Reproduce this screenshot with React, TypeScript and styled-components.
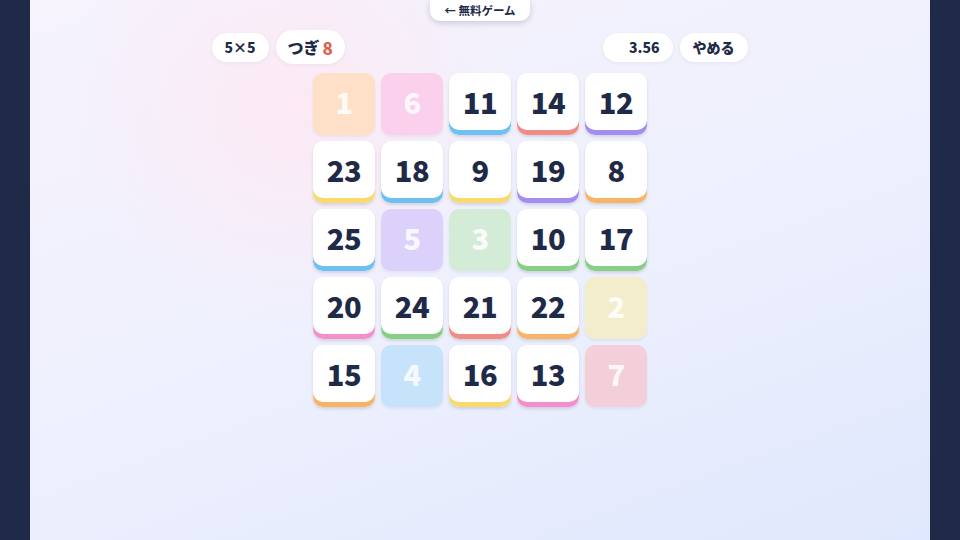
import styled, { createGlobalStyle } from "styled-components";

type Hue = "orange" | "pink" | "blue" | "red" | "purple" | "yellow" | "green";

interface Cell {
  value: number;
  hue: Hue;
  done?: boolean;
}

const hues: Record<Hue, { bar: string; soft: string }> = {
  orange: { bar: "#f7b466", soft: "#fde0c7" },
  pink: { bar: "#f48fcb", soft: "#fad0ec" },
  blue: { bar: "#6fc0f2", soft: "#c6e3fb" },
  red: { bar: "#f18c84", soft: "#f3d0d9" },
  purple: { bar: "#a48cf0", soft: "#dcd1fb" },
  yellow: { bar: "#f8da6e", soft: "#f4edcb" },
  green: { bar: "#86cf85", soft: "#d4ebd7" },
};

const board: Cell[] = [
  { value: 1, hue: "orange", done: true },
  { value: 6, hue: "pink", done: true },
  { value: 11, hue: "blue" },
  { value: 14, hue: "red" },
  { value: 12, hue: "purple" },
  { value: 23, hue: "yellow" },
  { value: 18, hue: "blue" },
  { value: 9, hue: "yellow" },
  { value: 19, hue: "purple" },
  { value: 8, hue: "orange" },
  { value: 25, hue: "blue" },
  { value: 5, hue: "purple", done: true },
  { value: 3, hue: "green", done: true },
  { value: 10, hue: "green" },
  { value: 17, hue: "green" },
  { value: 20, hue: "pink" },
  { value: 24, hue: "green" },
  { value: 21, hue: "red" },
  { value: 22, hue: "orange" },
  { value: 2, hue: "yellow", done: true },
  { value: 15, hue: "orange" },
  { value: 4, hue: "blue", done: true },
  { value: 16, hue: "yellow" },
  { value: 13, hue: "pink" },
  { value: 7, hue: "red", done: true },
];

const GlobalStyle = createGlobalStyle`
  html, body {
    margin: 0;
    padding: 0;
    width: 960px;
    height: 540px;
    overflow: hidden;
    background: #1e2a47;
    font-family: "Noto Sans CJK JP", "Noto Sans", sans-serif;
  }
`;

const Frame = styled.div`
  display: flex;
  justify-content: center;
  width: 960px;
  height: 540px;
  background: #1e2a47;
`;

const Stage = styled.main`
  display: flex;
  flex-direction: column;
  align-items: center;
  width: 900px;
  height: 540px;
  background:
    radial-gradient(circle at 29% 20%, rgba(253, 232, 243, 0.9) 0, rgba(253, 232, 243, 0) 220px),
    linear-gradient(160deg, #f6f3fd 0%, #eef0fd 50%, #e0e8fd 100%);
`;

const BackTab = styled.button`
  height: 21px;
  padding: 0 14px;
  border: none;
  border-radius: 0 0 10px 10px;
  background: #ffffff;
  box-shadow: 0 2px 6px rgba(30, 42, 71, 0.2);
  color: #1e2a47;
  font-family: inherit;
  font-size: 11.5px;
  font-weight: 700;
  line-height: 21px;
`;

const Header = styled.div`
  display: flex;
  justify-content: space-between;
  align-items: center;
  width: 536px;
  margin-top: 9px;
  margin-left: -1px;
`;

const Group = styled.div`
  display: flex;
  align-items: center;
  gap: 7px;
`;

const Pill = styled.div<{ $big?: boolean }>`
  display: flex;
  align-items: center;
  gap: 3px;
  height: ${(p) => (p.$big ? "34px" : "29px")};
  padding: 0 ${(p) => (p.$big ? "12px" : "13px")};
  border-radius: 17px;
  background: #ffffff;
  box-shadow: 0 1px 4px rgba(30, 42, 71, 0.06);
  color: #1e2a47;
  font-size: ${(p) => (p.$big ? "16px" : "14px")};
  font-weight: 800;
`;

const NextNum = styled.span`
  color: #e0604f;
  font-size: 17px;
`;

const Clock = styled.span`
  display: inline-block;
  width: 10px;
`;

const Grid = styled.div`
  display: grid;
  grid-template-columns: repeat(5, 62px);
  grid-auto-rows: 62px;
  gap: 6px;
  margin-top: 9px;
`;

const Tile = styled.div<{ $bar: string; $soft: string; $done?: boolean }>`
  display: flex;
  align-items: center;
  justify-content: center;
  padding-bottom: 6px;
  box-sizing: border-box;
  border-radius: 10px;
  background: ${(p) => (p.$done ? p.$soft : "#ffffff")};
  box-shadow: ${(p) =>
    p.$done
      ? "0 2px 3px rgba(30, 42, 71, 0.06)"
      : `inset 0 -5px 0 ${p.$bar}, 0 2px 3px rgba(30, 42, 71, 0.14)`};
  color: ${(p) => (p.$done ? "rgba(255, 255, 255, 0.85)" : "#1e2a47")};
  font-size: 29px;
  font-weight: 900;
  letter-spacing: -0.5px;
`;

export default function App() {
  return (
    <Frame>
      <GlobalStyle />
      <Stage>
        <BackTab>← 無料ゲーム</BackTab>
        <Header>
          <Group>
            <Pill>5×5</Pill>
            <Pill $big>
              つぎ <NextNum>8</NextNum>
            </Pill>
          </Group>
          <Group>
            <Pill>
              <Clock />
              3.56
            </Pill>
            <Pill>やめる</Pill>
          </Group>
        </Header>
        <Grid>
          {board.map((c) => (
            <Tile
              key={c.value}
              $bar={hues[c.hue].bar}
              $soft={hues[c.hue].soft}
              $done={c.done}
            >
              {c.value}
            </Tile>
          ))}
        </Grid>
      </Stage>
    </Frame>
  );
}
